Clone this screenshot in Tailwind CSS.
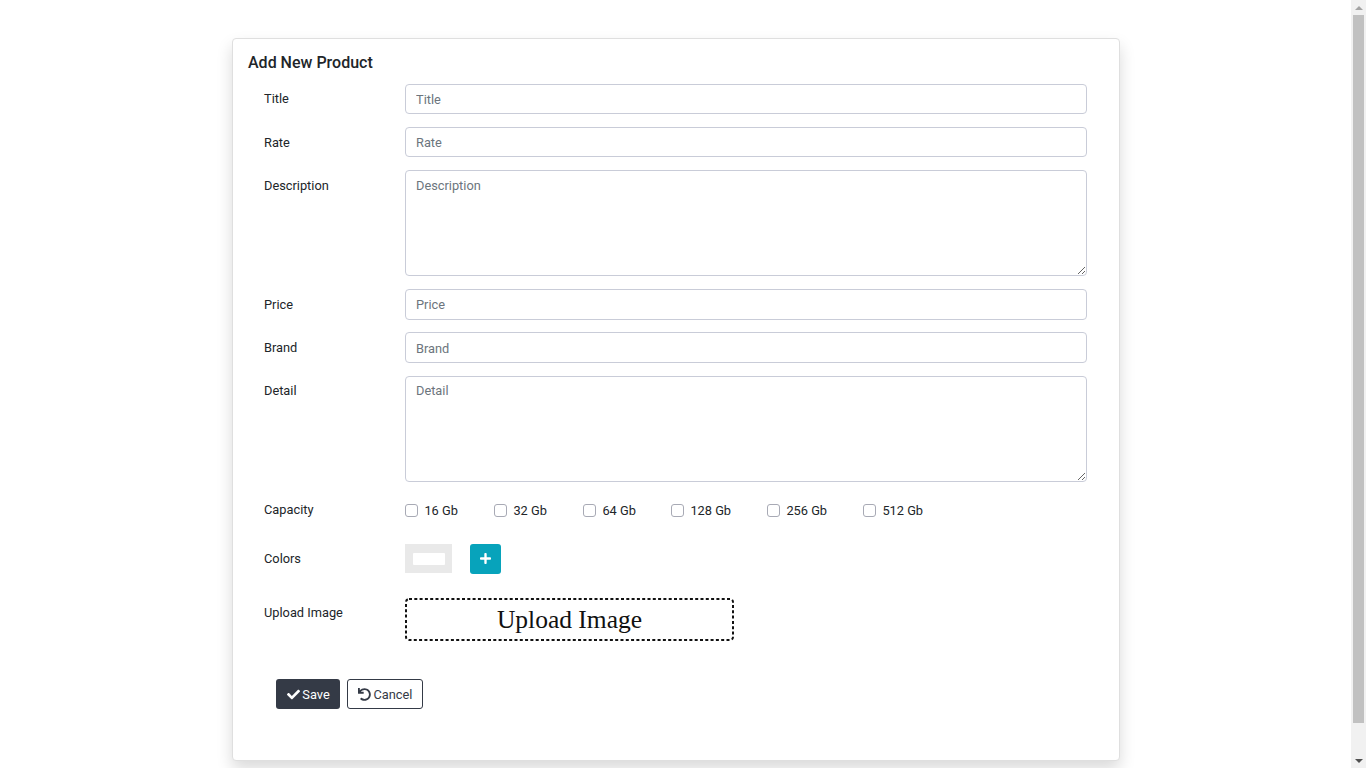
<!doctype html>
<html>
<head>
  <meta charset="UTF-8">
  <meta name="viewport" content="width=device-width, initial-scale=1.0">
  <script src="https://cdn.jsdelivr.net/npm/@tailwindcss/browser@4"></script>
</head>
<body class="bg-white h-screen overflow-hidden flex font-['Roboto',sans-serif] text-[12.8px] text-[#212529]">
  <main class="flex-1 pt-[38px] pl-[232px]">
    <section class="w-[888px] h-[723px] bg-white border border-[#dfdfdf] rounded-[4px] shadow-[0_8px_16px_rgba(0,0,0,0.15)] pt-[14px] pl-[15px]">
      <h2 class="text-[16px] leading-[20px] font-medium mb-[11px]">Add New Product</h2>
      <form class="pl-[16px]">
        <div class="flex mb-[13px]">
          <label for="title" class="w-[141px] pt-[7px] leading-[16px]">Title</label>
          <input id="title" type="text" placeholder="Title" class="w-[682px] h-[30px] border border-[#c9ccd8] rounded-[4px] px-[10px] placeholder:text-[#6c757d] outline-none">
        </div>
        <div class="flex mb-[13px]">
          <label for="rate" class="w-[141px] pt-[8px] leading-[16px]">Rate</label>
          <input id="rate" type="text" placeholder="Rate" class="w-[682px] h-[30px] border border-[#c9ccd8] rounded-[4px] px-[10px] placeholder:text-[#6c757d] outline-none">
        </div>
        <div class="flex mb-[13px]">
          <label for="description" class="w-[141px] pt-[8px] leading-[16px]">Description</label>
          <textarea id="description" placeholder="Description" class="w-[682px] h-[106px] border border-[#c9ccd8] rounded-[4px] px-[10px] py-[7px] leading-[16px] placeholder:text-[#6c757d] outline-none"></textarea>
        </div>
        <div class="flex mb-[12px]">
          <label for="price" class="w-[141px] pt-[8px] leading-[16px]">Price</label>
          <input id="price" type="text" placeholder="Price" class="w-[682px] h-[31px] border border-[#c9ccd8] rounded-[4px] px-[10px] placeholder:text-[#6c757d] outline-none">
        </div>
        <div class="flex mb-[13px]">
          <label for="brand" class="w-[141px] pt-[8px] leading-[16px]">Brand</label>
          <input id="brand" type="text" placeholder="Brand" class="w-[682px] h-[31px] border border-[#c9ccd8] rounded-[4px] px-[10px] pt-[2px] placeholder:text-[#6c757d] outline-none">
        </div>
        <div class="flex mb-[20px]">
          <label for="detail" class="w-[141px] pt-[7px] leading-[16px]">Detail</label>
          <textarea id="detail" placeholder="Detail" class="w-[682px] h-[106px] border border-[#c9ccd8] rounded-[4px] px-[10px] py-[6px] leading-[16px] placeholder:text-[#6c757d] outline-none"></textarea>
        </div>
        <div class="flex items-center h-[16px] mb-[26px]">
          <span class="w-[141px] leading-[16px]">Capacity</span>
          <div class="flex items-center pt-[2px]">
            <label class="flex items-center w-[89px]"><input type="checkbox" class="appearance-none w-[13px] h-[13px] border border-[#a8aab5] rounded-[3px] mr-[6.4px] mb-[2px] bg-white">16 Gb</label>
            <label class="flex items-center w-[89px]"><input type="checkbox" class="appearance-none w-[13px] h-[13px] border border-[#a8aab5] rounded-[3px] mr-[6.4px] mb-[2px] bg-white">32 Gb</label>
            <label class="flex items-center w-[88px]"><input type="checkbox" class="appearance-none w-[13px] h-[13px] border border-[#a8aab5] rounded-[3px] mr-[6.4px] mb-[2px] bg-white">64 Gb</label>
            <label class="flex items-center w-[96px]"><input type="checkbox" class="appearance-none w-[13px] h-[13px] border border-[#a8aab5] rounded-[3px] mr-[6.4px] mb-[2px] bg-white">128 Gb</label>
            <label class="flex items-center w-[96px]"><input type="checkbox" class="appearance-none w-[13px] h-[13px] border border-[#a8aab5] rounded-[3px] mr-[6.4px] mb-[2px] bg-white">256 Gb</label>
            <label class="flex items-center"><input type="checkbox" class="appearance-none w-[13px] h-[13px] border border-[#a8aab5] rounded-[3px] mr-[6.4px] mb-[2px] bg-white">512 Gb</label>
          </div>
        </div>
        <div class="flex items-center mb-[24px]">
          <span class="w-[141px] leading-[16px]">Colors</span>
          <div class="w-[47px] h-[29px] self-start bg-[#e9e9e9] flex items-start justify-center pt-[9px] mr-[18px]">
            <div class="w-[32px] h-[12px] bg-white rounded-[1px]"></div>
          </div>
          <button type="button" class="w-[31px] h-[30px] bg-[#07a3bb] rounded-[3px] flex items-center justify-center">
            <svg viewBox="0 0 448 512" class="w-[11px] h-[13px] mb-[2px] fill-white"><path d="M416 208H272V64c0-17.67-14.33-32-32-32h-32c-17.67 0-32 14.33-32 32v144H32c-17.67 0-32 14.33-32 32v32c0 17.67 14.33 32 32 32h144v144c0 17.67 14.33 32 32 32h32c17.67 0 32-14.33 32-32V304h144c17.67 0 32-14.33 32-32v-32c0-17.67-14.33-32-32-32z"/></svg>
          </button>
        </div>
        <div class="flex mb-[38px]">
          <span class="w-[141px] pt-[7px] leading-[16px]">Upload Image</span>
          <div class="relative w-[329px] h-[43px] pt-[1px] flex items-center justify-center font-['Liberation_Serif',serif] text-[25.5px] text-[#111]">
            Upload Image
            <svg class="absolute inset-0" width="329" height="43" fill="none"><rect x="1" y="1" width="327" height="41" rx="3" stroke="#111" stroke-width="2" stroke-dasharray="3 2.3"/></svg>
          </div>
        </div>
        <div class="flex pl-[12px] gap-[7px]">
          <button type="button" class="w-[64px] h-[30px] pt-[1px] pl-[1px] bg-[#343a46] text-white rounded-[3px] flex items-center justify-center gap-[2px]">
            <svg viewBox="0 0 512 512" class="w-[13px] h-[13px] mb-[1px] fill-white"><path d="M173.898 439.404l-166.4-166.4c-9.997-9.997-9.997-26.206 0-36.204l36.203-36.204c9.997-9.998 26.207-9.998 36.204 0L192 312.69 432.095 72.596c9.997-9.997 26.207-9.997 36.204 0l36.203 36.204c9.997 9.997 9.997 26.206 0 36.204l-294.4 294.401c-9.998 9.997-26.207 9.997-36.204-.001z"/></svg>
            Save
          </button>
          <button type="button" class="w-[76px] h-[30px] pt-[1px] bg-white border border-[#343a46] text-[#343a46] rounded-[3px] flex items-center justify-center gap-[3px]">
            <svg viewBox="0 0 512 512" class="w-[13px] h-[13px] mb-[1px] fill-[#343a46]"><path d="M212.333 224.333H12c-6.627 0-12-5.373-12-12V12C0 5.373 5.373 0 12 0h48c6.627 0 12 5.373 12 12v78.112C117.773 39.279 184.26 7.47 258.175 8.007c136.906.994 246.448 111.623 246.157 248.532C504.041 393.258 393.12 504 256.333 504c-64.089 0-122.496-24.313-166.51-64.215-5.099-4.622-5.334-12.554-.467-17.42l33.967-33.967c4.474-4.474 11.662-4.717 16.401-.525C170.76 415.336 211.58 432 256.333 432c97.268 0 176-78.716 176-176 0-97.267-78.716-176-176-176-58.496 0-110.28 28.476-142.274 72.333h98.274c6.627 0 12 5.373 12 12v48c0 6.627-5.373 12-12 12z"/></svg>
            Cancel
          </button>
        </div>
      </form>
    </section>
  </main>
  <aside class="w-[15px] h-screen bg-[#f1f1f1] flex flex-col items-center shrink-0">
    <div class="h-[15px] w-full flex items-center justify-center">
      <div class="w-0 h-0 border-x-[4px] border-x-transparent border-b-[4px] border-b-[#a3a3a3]"></div>
    </div>
    <div class="w-full px-[2px] flex-1">
      <div class="h-[708px] bg-[#c1c1c1]"></div>
    </div>
    <div class="h-[15px] w-full flex items-center justify-center">
      <div class="w-0 h-0 border-x-[4px] border-x-transparent border-t-[4px] border-t-[#505050]"></div>
    </div>
  </aside>
</body>
</html>
